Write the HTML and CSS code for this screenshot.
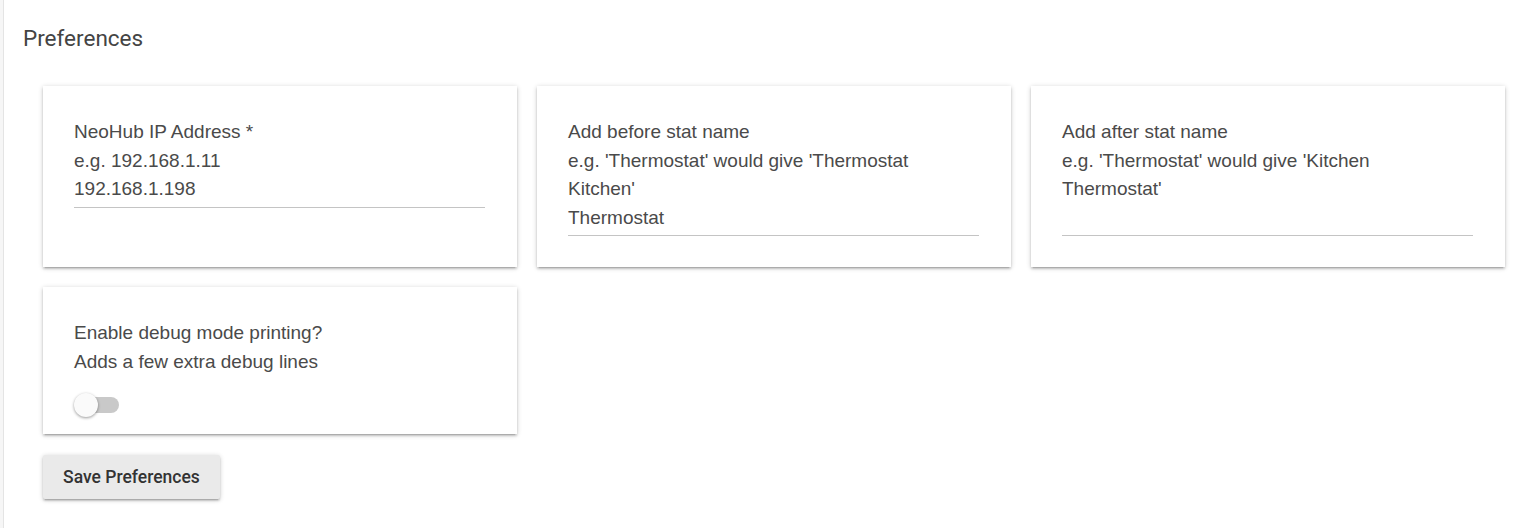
FILE: index.html
```html
<!DOCTYPE html>
<html>
<head>
<meta charset="utf-8">
<link rel="stylesheet" href="styles.css">
</head>
<body>
<div class="page">
  <h1 class="title">Preferences</h1>
  <div class="grid">
    <div class="card">
      <div class="label">NeoHub IP Address *<br>e.g. 192.168.1.11</div>
      <div class="input">192.168.1.198</div>
    </div>
    <div class="card">
      <div class="label">Add before stat name<br>e.g. 'Thermostat' would give 'Thermostat Kitchen'</div>
      <div class="input">Thermostat</div>
    </div>
    <div class="card">
      <div class="label">Add after stat name<br>e.g. 'Thermostat' would give 'Kitchen Thermostat'</div>
      <div class="input"></div>
    </div>
    <div class="card card-switch">
      <div class="label">Enable debug mode printing?<br>Adds a few extra debug lines</div>
      <div class="switch"><span class="knob"></span></div>
    </div>
  </div>
  <button class="btn">Save Preferences</button>
</div>
</body>
</html>
```
FILE: styles.css
```css
html, body {
  margin: 0;
  padding: 0;
  background: #ffffff;
}
body {
  font-family: "Liberation Sans", Arial, sans-serif;
  color: #4a4a4a;
}
.page {
  min-height: 528px;
  box-sizing: border-box;
  border-left: 1px solid #e4e4e4;
  margin-left: 3px;
  padding: 23px 23px 0 19px;
  position: relative;
}
.page::before {
  content: "";
  position: absolute;
  left: -4px;
  top: 0;
  bottom: 0;
  width: 3px;
  background: #f6f6f6;
}
.title {
  margin: 0;
  font-family: Roboto, sans-serif;
  font-weight: 400;
  font-size: 22.5px;
  line-height: 30px;
  color: #444;
}
.grid {
  display: grid;
  grid-template-columns: repeat(3, 474px);
  column-gap: 20px;
  row-gap: 20px;
  margin-top: 33px;
  margin-left: 20px;
}
.card {
  background: #fff;
  padding: 32px 32px 31px 31px;
  box-shadow: 0 2px 2px rgba(0,0,0,.14), 0 3px 1px -2px rgba(0,0,0,.12), 0 1px 5px rgba(0,0,0,.2);
  font-size: 19px;
  line-height: 28.5px;
}
.card-switch {
  padding-bottom: 21px;
}
.input {
  min-height: 28.5px;
  padding-bottom: 3px;
  border-bottom: 1px solid #c4c4c4;
}
.switch {
  position: relative;
  margin-top: 21px;
  margin-left: 6px;
  width: 39px;
  height: 16px;
  border-radius: 8px;
  background: #c9c9c9;
}
.knob {
  position: absolute;
  left: -6px;
  top: -4px;
  width: 24px;
  height: 24px;
  border-radius: 50%;
  background: #fafafa;
  box-shadow: 0 1px 3px rgba(0,0,0,.4);
}
.btn {
  display: block;
  margin: 21px 0 0 20px;
  width: 177px;
  height: 44px;
  border: none;
  border-radius: 2px;
  background: #eaeaea;
  font-family: Roboto, sans-serif;
  font-weight: 500;
  font-size: 17.5px;
  color: #333;
  box-shadow: 0 2px 2px rgba(0,0,0,.14), 0 3px 1px -2px rgba(0,0,0,.12), 0 1px 5px rgba(0,0,0,.2);
  padding: 0;
}
```
